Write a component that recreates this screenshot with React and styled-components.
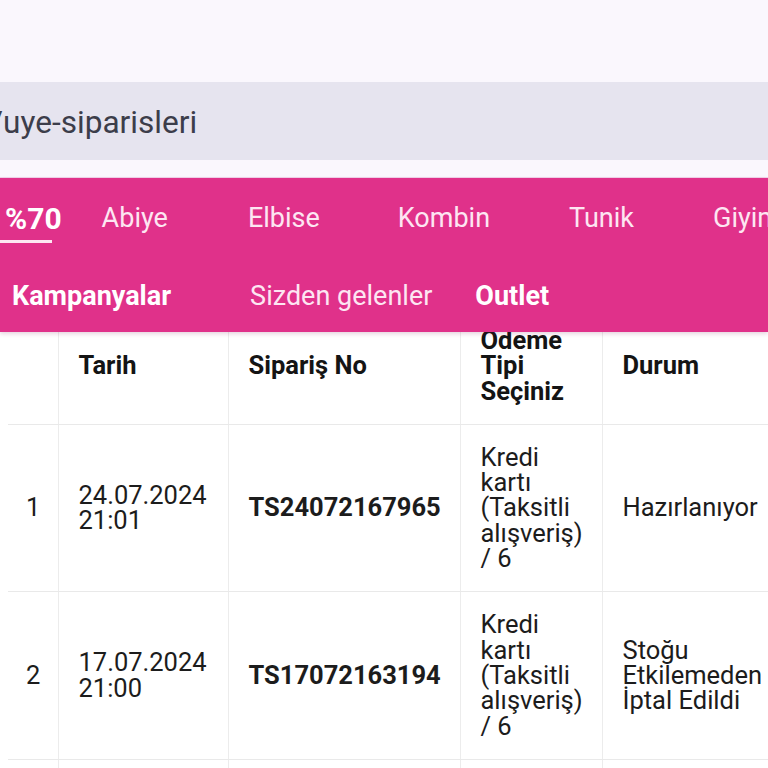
import styled, { createGlobalStyle } from "styled-components";

const Global = createGlobalStyle`
  html, body {
    margin: 0;
    padding: 0;
    background: #faf7fd;
    font-family: Roboto, "Noto Sans", sans-serif;
    overflow: hidden;
  }
`;

const Page = styled.div`
  width: 768px;
  height: 768px;
  overflow: hidden;
  background: #faf7fd;
`;

const TopSpace = styled.div`
  height: 82px;
  background: #faf7fd;
`;

const UrlBar = styled.div`
  height: 78px;
  box-sizing: border-box;
  padding-top: 3px;
  background: #e6e4ef;
  display: flex;
  align-items: center;
  overflow: hidden;
  white-space: nowrap;

  span {
    margin-left: -10px;
    font-size: 31.6px;
    color: #3c3d4a;
  }
`;

const Gap = styled.div`
  height: 17px;
  background: #faf7fd;
  border-bottom: 1px solid #f1d3ea;
`;

const Nav = styled.nav`
  position: relative;
  z-index: 2;
  background: #e0318a;
  box-shadow: 0 2px 4px rgba(120, 20, 80, 0.18);
`;

const NavRow = styled.div`
  height: ${(p) => p.$h}px;
  box-sizing: border-box;
  padding-top: ${(p) => p.$pt || 0}px;
  display: flex;
  align-items: center;
  white-space: nowrap;
  overflow: hidden;
`;

const NavItem = styled.a`
  position: relative;
  flex: none;
  font-size: ${(p) => p.$size || 27}px;
  color: ${(p) => (p.$bold ? "#ffffff" : "#fde6f2")};
  font-weight: ${(p) => (p.$bold ? 700 : 400)};
  padding: 0 ${(p) => p.$pr}px 0 ${(p) => p.$pl}px;

  ${(p) =>
    p.$active &&
    `
    &::after {
      content: "";
      position: absolute;
      left: 0;
      width: 52px;
      bottom: -7px;
      height: 3px;
      background: #fde6f2;
    }
  `}
`;

const TableWrap = styled.div`
  margin-top: -24px;
  background: #ffffff;
  padding-left: 8px;
  overflow: hidden;
`;

const Table = styled.table`
  border-collapse: collapse;
  table-layout: fixed;
  width: 820px;
  color: #1c1c1c;
  font-size: 25.5px;
  line-height: 25.3px;
`;

const Th = styled.th`
  box-sizing: border-box;
  width: ${(p) => p.$w}px;
  text-align: left;
  font-weight: 700;
  color: #141414;
  padding: 20px 12px 20px ${(p) => p.$pl || 20}px;
  border-bottom: 1.5px solid #e9e9e9;
  border-left: ${(p) => (p.$first ? "none" : "1.5px solid #ececec")};
  vertical-align: middle;
`;

const Td = styled.td`
  box-sizing: border-box;
  padding: 20px 12px 20px ${(p) => p.$pl || 20}px;
  border-bottom: 1.5px solid #e9e9e9;
  border-left: ${(p) => (p.$first ? "none" : "1.5px solid #ececec")};
  font-weight: ${(p) => (p.$bold ? 700 : 400)};
  vertical-align: middle;
  white-space: nowrap;
`;

const rows = [
  {
    n: "1",
    date: ["24.07.2024", "21:01"],
    no: "TS24072167965",
    pay: ["Kredi", "kartı", "(Taksitli", "alışveriş)", "/ 6"],
    status: ["Hazırlanıyor"],
  },
  {
    n: "2",
    date: ["17.07.2024", "21:00"],
    no: "TS17072163194",
    pay: ["Kredi", "kartı", "(Taksitli", "alışveriş)", "/ 6"],
    status: ["Stoğu", "Etkilemeden", "İptal Edildi"],
  },
  {
    n: "3",
    date: ["10.07.2024", "18:42"],
    no: "TS10072158211",
    pay: ["Kredi", "kartı", "(Taksitli", "alışveriş)", "/ 6"],
    status: ["Teslim Edildi"],
  },
];

const Lines = ({ items }) =>
  items.map((t, i) => (
    <div key={i}>{t}</div>
  ));

export default function App() {
  return (
    <Page>
      <Global />
      <TopSpace />
      <UrlBar>
        <span>/uye-siparisleri</span>
      </UrlBar>
      <Gap />
      <Nav>
        <NavRow $h={78} $pt={2}>
          <NavItem $bold $active $size={30} $pl={5} $pr={0}>%70</NavItem>
          <NavItem $pl={40} $pr={40}>Abiye</NavItem>
          <NavItem $pl={40} $pr={39}>Elbise</NavItem>
          <NavItem $pl={39} $pr={40}>Kombin</NavItem>
          <NavItem $pl={39} $pr={40}>Tunik</NavItem>
          <NavItem $pl={39} $pr={40}>Giyim</NavItem>
        </NavRow>
        <NavRow $h={76} $pt={4}>
          <NavItem $bold $pl={12} $pr={0}>Kampanyalar</NavItem>
          <NavItem $pl={79} $pr={0}>Sizden gelenler</NavItem>
          <NavItem $bold $pl={43} $pr={0}>Outlet</NavItem>
        </NavRow>
      </Nav>
      <TableWrap>
        <Table>
          <thead>
            <tr>
              <Th $w={50} $first $pl={18}></Th>
              <Th $w={170}>Tarih</Th>
              <Th $w={232}>Sipariş No</Th>
              <Th $w={142}>
                <Lines items={["Ödeme", "Tipi", "Seçiniz"]} />
              </Th>
              <Th $w={226}>Durum</Th>
            </tr>
          </thead>
          <tbody>
            {rows.map((r) => (
              <tr key={r.n}>
                <Td $first $pl={18}>{r.n}</Td>
                <Td>
                  <Lines items={r.date} />
                </Td>
                <Td $bold>{r.no}</Td>
                <Td>
                  <Lines items={r.pay} />
                </Td>
                <Td>
                  <Lines items={r.status} />
                </Td>
              </tr>
            ))}
          </tbody>
        </Table>
      </TableWrap>
    </Page>
  );
}
